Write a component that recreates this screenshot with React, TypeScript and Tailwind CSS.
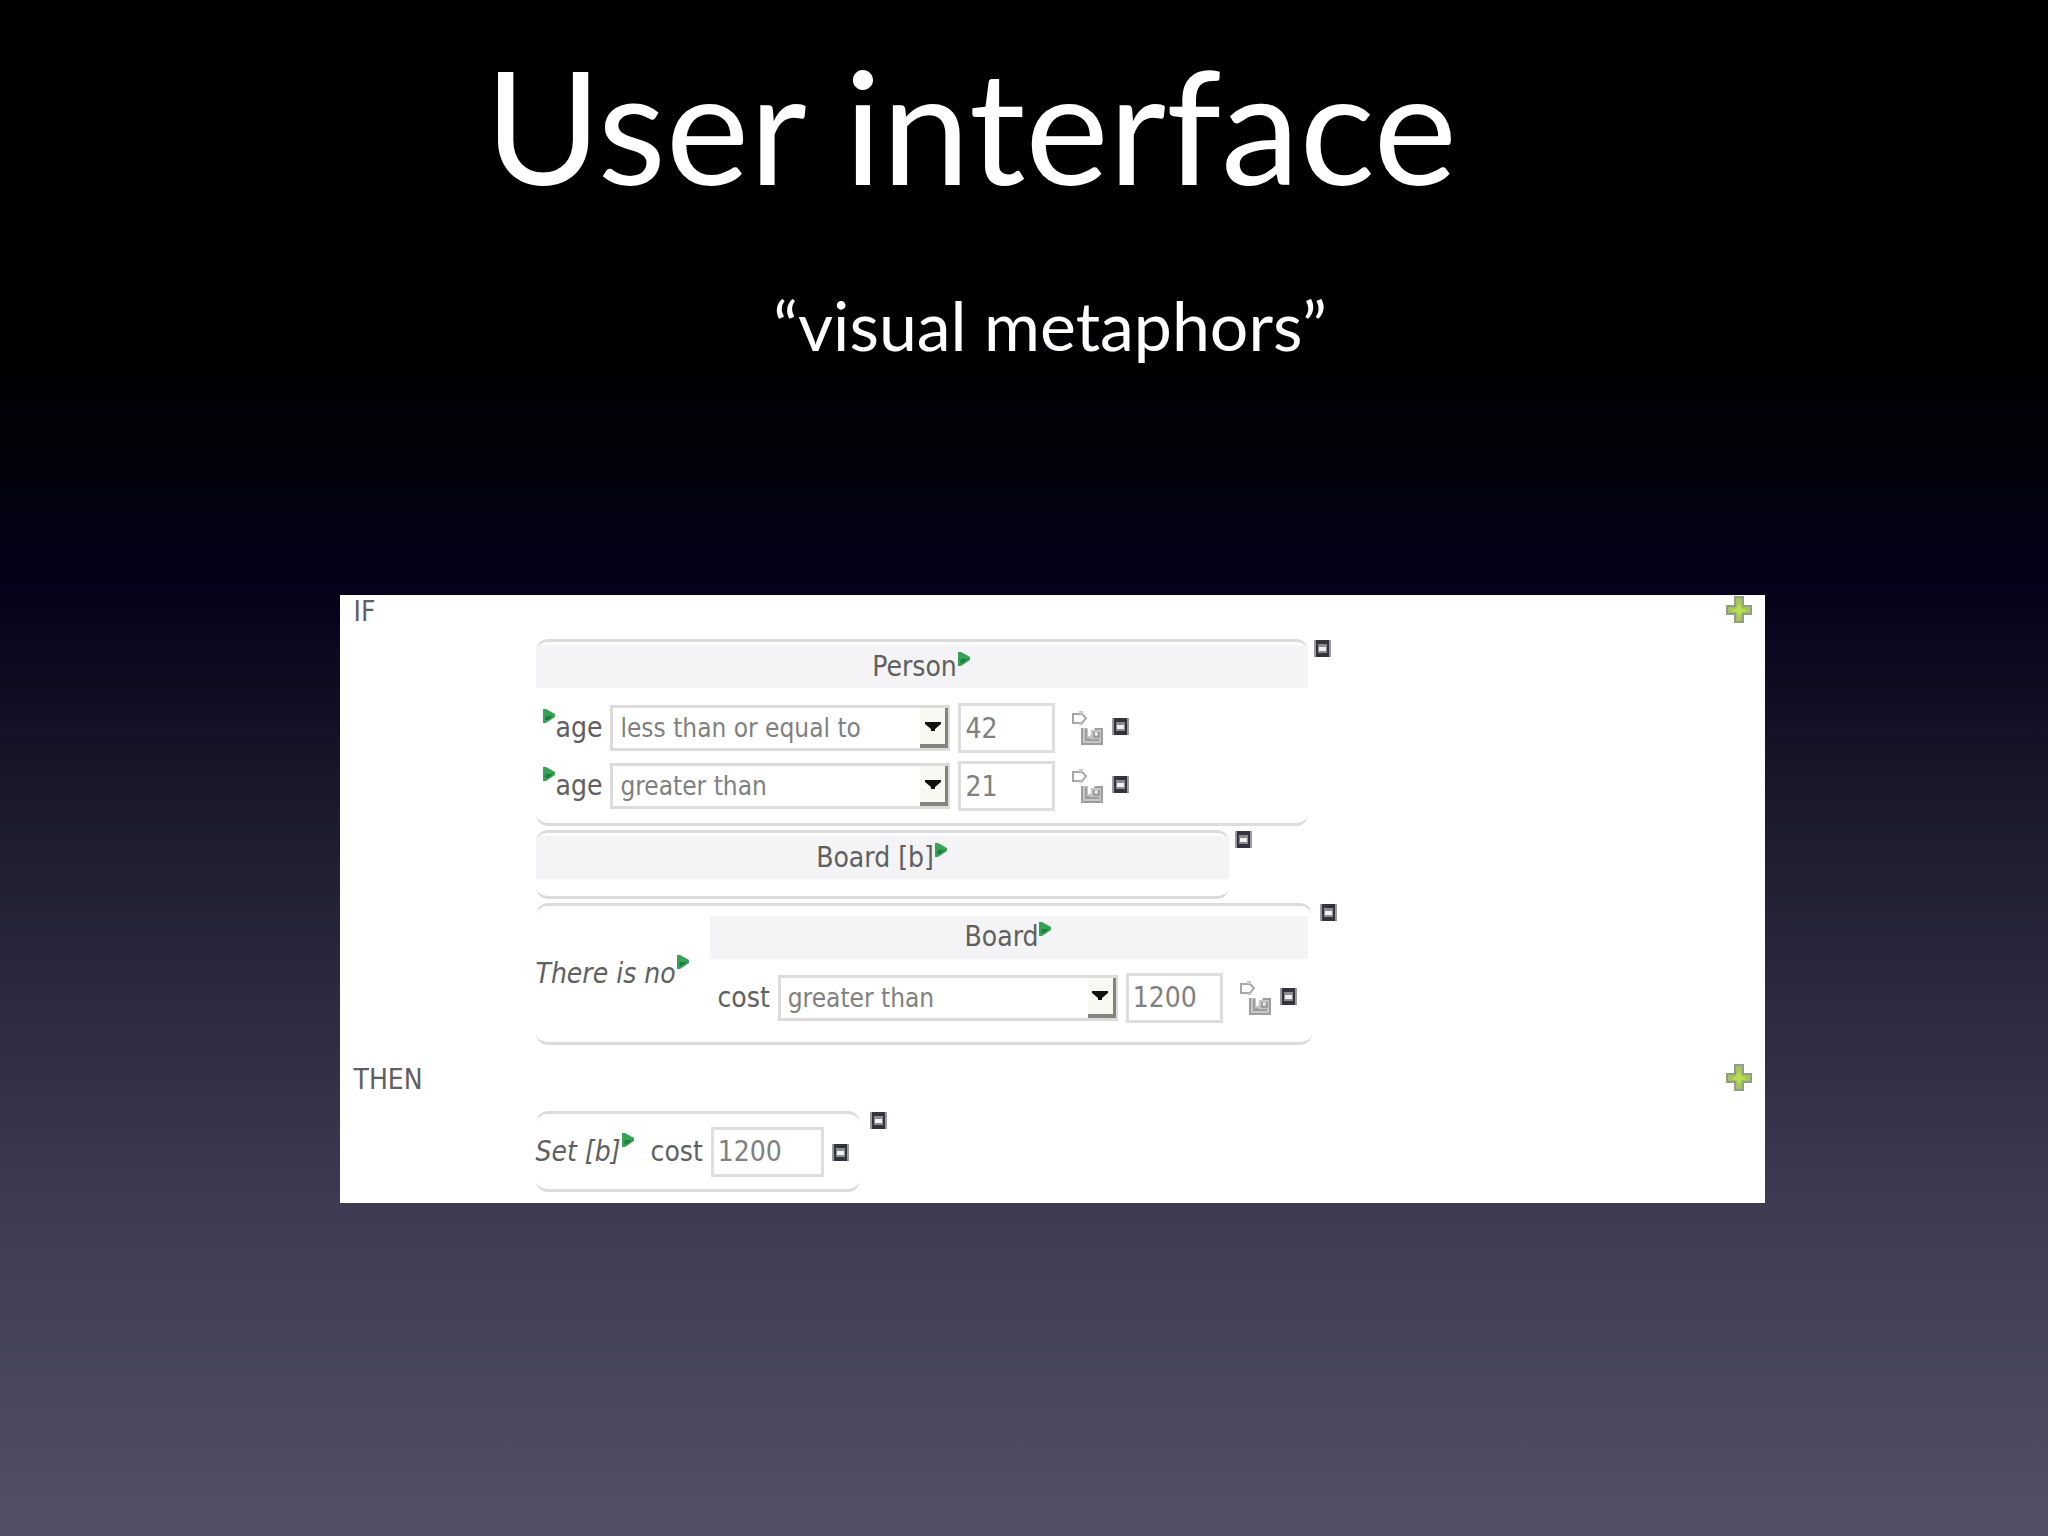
import React from "react";

const Flag = () => (
  <svg viewBox="0 0 14 14" className="h-[14px] w-[14px] shrink-0" aria-hidden="true">
    <path d="M1 0h3l9 5v3l-9 6H1z" fill="#35a256" />
    <path d="M4 7h7l-5 4H3z" fill="#1f7f3c" />
  </svg>
);

const RemoveButton = ({ label }: { label: string }) => (
  <button type="button" aria-label={label} className="h-[18px] w-[17px] shrink-0">
    <svg viewBox="0 0 17 18" className="h-full w-full">
      <rect x="0" y="1" width="17" height="17" fill="#9a9aa2" />
      <rect x="2" y="1" width="13" height="17" fill="#34343c" />
      <rect x="4" y="5" width="9" height="9" fill="#8b8b90" />
      <rect x="5" y="8" width="7" height="4" fill="#f2f2f2" />
    </svg>
  </button>
);

const AddButton = ({ label }: { label: string }) => (
  <button type="button" aria-label={label} className="h-[28px] w-[26px] shrink-0">
    <svg viewBox="0 0 26 28" className="h-full w-full">
      <path d="M9 2h8v9h8v8h-8v8H9v-8H1v-8h8z" fill="#a6bd72" stroke="#929f80" strokeWidth="2" />
      <path d="M11 5h4v8h8v4h-8v8h-4v-8H3v-4h8z" fill="#a5cc50" />
      <path d="M11 10h4v4h4v3h-4v3h-4v-3H7v-3h4z" fill="#b6e04c" />
    </svg>
  </button>
);

const ConnectiveButton = ({ label }: { label: string }) => (
  <button type="button" aria-label={label} className="h-[34px] w-[32px] shrink-0">
    <svg viewBox="0 0 32 34" className="h-full w-full" fill="none">
      <path d="M2 3h9l4 4-4 5H2z" stroke="#a6a6a6" strokeWidth="2" />
      <path d="M8 0h4v3H8zM8 12h4v2H8z" fill="#c8c8c8" />
      <path d="M10 17h7v8h2v-6h4v-2h9v17H10z" fill="#c6c6c6" />
      <path d="M11 17v16h20V18h-7M15 18v10h4M23 21v5h5v-5M14 29h14" stroke="#9e9e9e" strokeWidth="2" />
      <path d="M19 18v6M25 22v2" stroke="#fff" strokeWidth="2" />
    </svg>
  </button>
);

const OPERATORS = ["less than or equal to", "greater than"];

const OperatorSelect = ({ value, label }: { value: string; label: string }) => (
  <div className="relative">
    <select
      aria-label={label}
      defaultValue={value}
      className="block h-[46px] w-[340px] appearance-none border-[3px] border-[#dcdcdc] bg-white pl-[7px] text-[26px] text-[#808080]"
    >
      {OPERATORS.map((o) => (
        <option key={o}>{o}</option>
      ))}
    </select>
    <span className="pointer-events-none absolute top-[3px] right-[2px] flex h-[40px] w-[28px] items-center justify-center border-r-[3px] border-b-[4px] border-[#858580] bg-[#f9f9f4]">
      <svg viewBox="0 0 16 9" className="h-[9px] w-[16px]">
        <path d="M0 0h16v2l-6 5v2H6V7L0 2z" fill="#111" />
      </svg>
    </span>
  </div>
);

type ConstraintProps = {
  id: string;
  field: string;
  operator: string;
  value: string;
  flag?: boolean;
};

const Constraint = ({ id, field, operator, value, flag }: ConstraintProps) => (
  <div className="flex items-center">
    {flag && (
      <span className="mb-6">
        <Flag />
      </span>
    )}
    <label htmlFor={id} className="mr-2">
      {field}
    </label>
    <OperatorSelect value={operator} label={`${field} operator`} />
    <input
      id={id}
      defaultValue={value}
      className="ml-2 h-[50px] w-[97px] border-[3px] border-[#dedede] bg-white pl-[4px] text-[#808080]"
    />
    <div className="ml-4 flex items-center gap-[9px]">
      <ConnectiveButton label={`Add to ${field}`} />
      <span className="mb-1 flex">
        <RemoveButton label={`Remove ${field}`} />
      </span>
    </div>
  </div>
);

const CardHeader = ({ title }: { title: string }) => (
  <h2 className="flex h-[43px] items-center justify-center bg-[#f4f3f5]">
    {title}
    <span className="mb-4">
      <Flag />
    </span>
  </h2>
);

const CARD = "rounded-xl border-y-[3px] border-[#dcdcdc]";

const App = () => {
  return (
    <main className="min-h-screen bg-[linear-gradient(180deg,#000_0%,#000_20%,#020108_29%,#03021a_38%,#191729_51%,#2d2a3f_65%,#3e3b53_79%,#535165_100%)] pb-16">
      <header className="text-center font-['Gill_Sans','Lato',sans-serif] text-white">
        <h1 className="pt-6 pr-[106px] text-[158px] leading-[200px]">User interface</h1>
        <p className="pt-[61px] pl-[52px] text-[68px] leading-[80px]">“visual metaphors”</p>
      </header>

      <div className="mt-[230px] pl-[56px]">
        <section className="mx-auto w-full max-w-[1425px] bg-white pb-[11px] font-['DejaVu_Sans_Condensed','DejaVu_Sans',sans-serif] text-[28px] leading-[34px] text-[#606060]">
          <div className="flex h-[44px] items-start justify-between pr-[13px] pl-[14px]">
            <span>IF</span>
            <AddButton label="Add condition" />
          </div>

          <div className="flex flex-col gap-1 pl-[196px]">
            <div className="flex gap-[6px]">
              <div className={`${CARD} h-[187px] w-[772px] pt-[3px]`}>
                <CardHeader title="Person" />
                <div className="mt-[15px] flex flex-col gap-2 pl-[6px]">
                  <Constraint id="age-max" field="age" operator="less than or equal to" value="42" flag />
                  <Constraint id="age-min" field="age" operator="greater than" value="21" flag />
                </div>
              </div>
              <RemoveButton label="Remove Person" />
            </div>

            <div className="flex gap-[6px]">
              <div className={`${CARD} h-[69px] w-[693px] pt-[3px]`}>
                <CardHeader title="Board [b]" />
              </div>
              <RemoveButton label="Remove Board [b]" />
            </div>

            <div className="flex gap-[8px]">
              <div className={`${CARD} flex h-[142px] w-[776px] items-center`}>
                <div className="flex w-[174px] items-center italic">
                  There is no
                  <span className="mb-6">
                    <Flag />
                  </span>
                </div>
                <div className="mr-1 flex-1 pb-[10px]">
                  <CardHeader title="Board" />
                  <div className="mt-[14px] pl-2">
                    <Constraint id="cost" field="cost" operator="greater than" value="1200" />
                  </div>
                </div>
              </div>
              <RemoveButton label="Remove There is no" />
            </div>
          </div>

          <div className="mt-[18px] flex h-[48px] items-start justify-between pr-[13px] pl-[14px]">
            <span>THEN</span>
            <AddButton label="Add action" />
          </div>

          <div className="flex gap-[10px] pl-[196px]">
            <div className={`${CARD} flex h-[81px] w-[324px] items-center`}>
              <span className="italic">Set [b]</span>
              <span className="mr-4 mb-6">
                <Flag />
              </span>
              <label htmlFor="set-cost" className="mr-2">
                cost
              </label>
              <input
                id="set-cost"
                defaultValue="1200"
                className="mr-2 h-[50px] w-[113px] border-[3px] border-[#dedede] bg-white pl-[4px] text-[#808080]"
              />
              <RemoveButton label="Remove cost" />
            </div>
            <RemoveButton label="Remove Set [b]" />
          </div>
        </section>
      </div>
    </main>
  );
};

export default App;
